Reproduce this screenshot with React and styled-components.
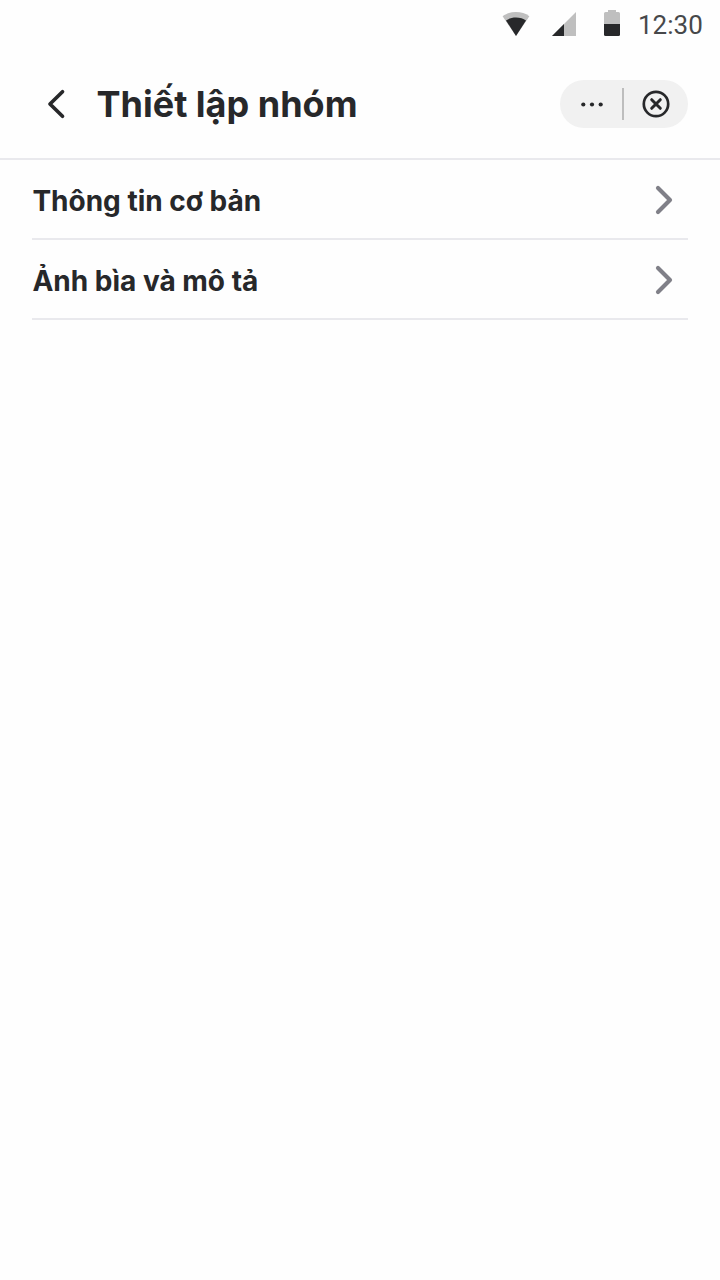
import React from "react";
import styled, { createGlobalStyle } from "styled-components";

const GlobalStyle = createGlobalStyle`
    * {
        box-sizing: border-box;
    }
    body {
        margin: 0;
        background: #fefefe;
        color: #27282a;
        font-family: Inter, "Liberation Sans", sans-serif;
    }
`;

const Screen = styled.div`
    width: 720px;
    min-height: 1280px;
    background: #fefefe;
`;

const StatusBar = styled.div`
    display: flex;
    align-items: center;
    justify-content: flex-end;
    height: 48px;
    padding-right: 17px;

    svg {
        display: block;
        margin-right: 16px;
    }
`;

const Clock = styled.span`
    width: 65px;
    margin: 2px 0 0 -6px;
    padding-right: 0.500px;
    font-family: Roboto, sans-serif;
    font-size: 26px;
    line-height: 32px;
    text-align: right;
    white-space: nowrap;
    color: #47484a;
`;

const Header = styled.header`
    display: flex;
    align-items: center;
    height: 112px;
    padding: 2px 32px 0;
    border-bottom: 2px solid #e9e9ed;
`;

const IconButton = styled.button`
    display: flex;
    align-items: center;
    justify-content: center;
    width: ${props => props.$width || 48}px;
    height: 48px;
    padding: 0;
    border: 0;
    background: none;
    color: inherit;
`;

const Title = styled.h1`
    flex: 1;
    margin: 0 0 0 16.500px;
    font-size: 36px;
    font-weight: 700;
    line-height: 48px;
`;

const Actions = styled.div`
    display: flex;
    align-items: center;
    width: 128px;
    height: 48px;
    border-radius: 24px;
    background: #f1f1f1;
`;

const Separator = styled.span`
    width: 2px;
    height: 32px;
    margin: 0 0 0 -2px;
    background: #bdbdbd;
`;

const List = styled.ul`
    margin: 0;
    padding: 0 32px;
    list-style: none;
`;

const Item = styled.li`
    display: flex;
    align-items: center;
    justify-content: space-between;
    height: 80px;
    border-bottom: 2px solid #e9e9ed;
`;

const Label = styled.span`
    padding: 4px 0 0 0.400px;
    font-size: 28px;
    font-weight: 700;
    line-height: 40px;
`;

const settings = ["Thông tin cơ bản", "Ảnh bìa và mô tả"];

function WifiIcon() {
    return (
        <svg width="32" height="48" viewBox="0 0 32 48">
            <path d="M16 36 2.6 16.2C6.400 13.400 11 12 16 12s9.600 1.400 13.400 4.200Z" fill="#bfbfbf" />
            <path d="M16 36 6 20.500c2.600-1.900 6-3 10-3s7.400 1.100 10 3Z" fill="#27282a" />
        </svg>
    );
}

function SignalIcon() {
    return (
        <svg width="32" height="48" viewBox="0 0 32 48">
            <path d="M4 36 28 12v24Z" fill="#bfbfbf" />
            <path d="M4 36 16 24v12Z" fill="#27282a" />
        </svg>
    );
}

function BatteryIcon() {
    return (
        <svg width="32" height="48" viewBox="0 0 32 48">
            <path d="M8 24V13.500Q8 12 9.500 12H12v-2h8v2h2.500q1.500 0 1.500 1.500V24Z" fill="#bfbfbf" />
            <path d="M8 24h16v10.500q0 1.500-1.500 1.500h-13Q8 36 8 34.500Z" fill="#27282a" />
        </svg>
    );
}

function BackIcon() {
    return (
        <svg width="48" height="48" viewBox="0 0 48 48" fill="none" stroke="currentColor" strokeWidth="3.700" strokeLinecap="round" strokeLinejoin="round">
            <path d="M30.500 11.700 18 24l12.500 12.300" />
        </svg>
    );
}

function MoreIcon() {
    return (
        <svg width="64" height="48" viewBox="0 0 64 48" fill="currentColor">
            <circle cx="23.300" cy="24.500" r="2.100" />
            <circle cx="32" cy="24.500" r="2.100" />
            <circle cx="40.700" cy="24.500" r="2.100" />
        </svg>
    );
}

function CloseIcon() {
    return (
        <svg width="64" height="48" viewBox="0 0 64 48" fill="none" stroke="currentColor" strokeWidth="2.700" strokeLinecap="round">
            <circle cx="32" cy="24" r="12.200" />
            <path d="m27.700 19.700 8.600 8.600M36.300 19.700l-8.600 8.600" strokeWidth="3" />
        </svg>
    );
}

function ChevronIcon() {
    return (
        <svg width="48" height="48" viewBox="0 0 48 48" fill="none" stroke="#808088" strokeWidth="4.200" strokeLinecap="round" strokeLinejoin="round">
            <path d="M18 13 30 25 18 37" />
        </svg>
    );
}

function App() {
    const items = settings.map(label => (
        <Item key={label}>
            <Label>{label}</Label>
            <ChevronIcon />
        </Item>
    ));
    return (
        <Screen>
            <GlobalStyle />
            <StatusBar>
                <WifiIcon />
                <SignalIcon />
                <BatteryIcon />
                <Clock>12:30</Clock>
            </StatusBar>
            <Header>
                <IconButton aria-label="Quay lại">
                    <BackIcon />
                </IconButton>
                <Title>Thiết lập nhóm</Title>
                <Actions>
                    <IconButton $width={64} aria-label="Thêm">
                        <MoreIcon />
                    </IconButton>
                    <Separator />
                    <IconButton $width={64} aria-label="Đóng">
                        <CloseIcon />
                    </IconButton>
                </Actions>
            </Header>
            <List>{items}</List>
        </Screen>
    );
}

export default App;
